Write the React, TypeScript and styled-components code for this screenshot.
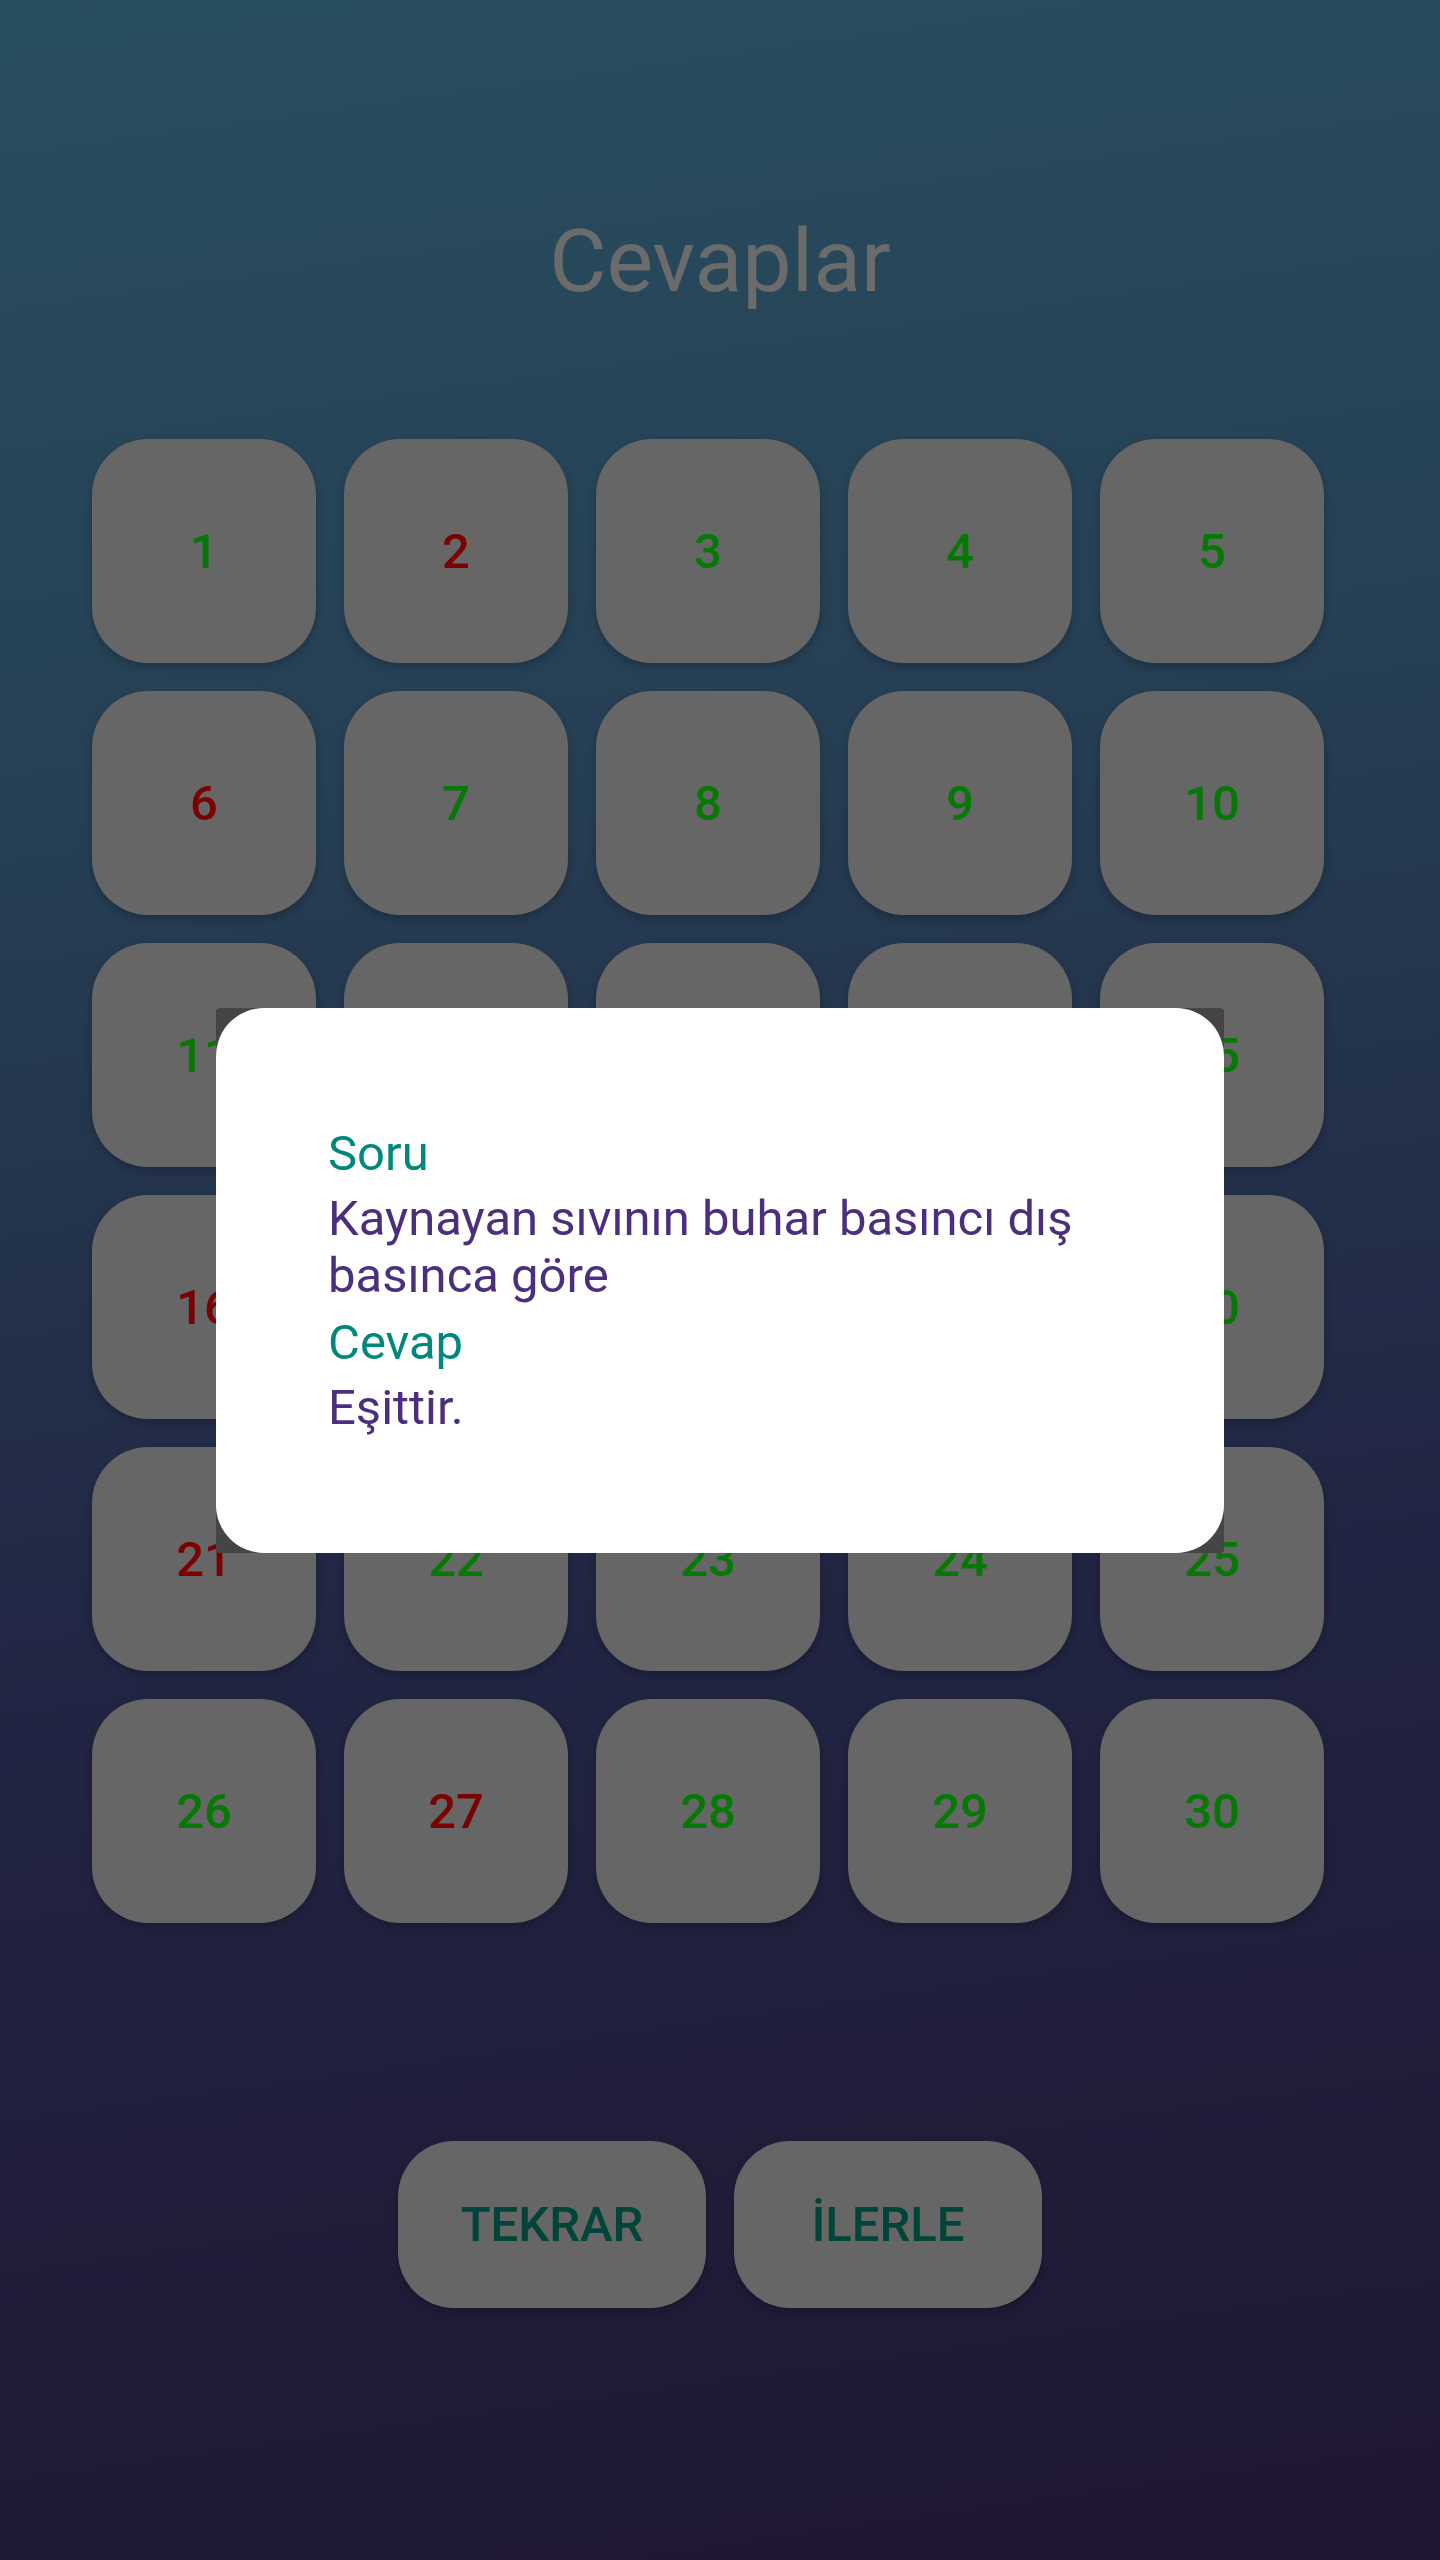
import React from "react";
import styled, { createGlobalStyle } from "styled-components";

const GlobalStyle = createGlobalStyle`
  html, body {
    margin: 0;
    padding: 0;
  }
  body {
    font-family: Roboto, "Noto Sans", sans-serif;
  }
`;

const Screen = styled.div`
  width: 1440px;
  height: 2560px;
  background: linear-gradient(172deg, #284f5f 0%, #263f54 30%, #212543 62%, #1f1631 100%);
  display: flex;
  flex-direction: column;
  overflow: hidden;
`;

const Title = styled.h1`
  margin: 209px 0 0;
  font-family: Roboto, sans-serif;
  font-weight: 400;
  font-size: 88px;
  line-height: 103px;
  color: #6b6b6b;
  text-align: center;
`;

const Grid = styled.div`
  margin-top: 127px;
  padding-left: 92px;
  display: grid;
  grid-template-columns: repeat(5, 224px);
  grid-auto-rows: 224px;
  gap: 28px;
`;

const Tile = styled.div<{ $ok: boolean }>`
  background: #666666;
  border-radius: 56px;
  box-shadow: 0 4px 8px rgba(0, 0, 0, 0.22);
  display: flex;
  align-items: center;
  justify-content: center;
  font-family: Roboto, sans-serif;
  font-weight: 500;
  font-size: 49px;
  color: ${(p) => (p.$ok ? "#067806" : "#7a0202")};
`;

const ButtonRow = styled.div`
  margin-top: 218px;
  display: flex;
  justify-content: center;
  gap: 28px;
`;

const ActionButton = styled.div`
  width: 308px;
  height: 167px;
  background: #666666;
  border-radius: 56px;
  box-shadow: 0 4px 8px rgba(0, 0, 0, 0.22);
  display: flex;
  align-items: center;
  justify-content: center;
  font-family: Roboto, sans-serif;
  font-weight: 500;
  font-size: 49px;
  letter-spacing: 0;
  color: #00443a;
`;

const Overlay = styled.div`
  position: fixed;
  inset: 0;
  display: flex;
  align-items: center;
  justify-content: center;
`;

const DialogFrame = styled.div`
  width: 1008px;
  height: 545px;
  background: #454545;
  border-radius: 4px;
  display: flex;
`;

const DialogCard = styled.div`
  flex: 1;
  background: #ffffff;
  border-radius: 48px;
  padding: 0 112px;
  display: flex;
  flex-direction: column;
  justify-content: center;
`;

const Label = styled.div<{ $first?: boolean }>`
  font-family: Roboto, sans-serif;
  font-size: 49px;
  line-height: 57px;
  color: #00897b;
  margin-top: ${(p) => (p.$first ? "0" : "10px")};
`;

const Body = styled.div`
  font-family: Roboto, sans-serif;
  font-size: 49px;
  line-height: 57px;
  color: #4b2f7e;
  margin-top: 8px;
`;

const wrong = new Set([2, 6, 16, 21, 27]);

export default function App() {
  const nums = Array.from({ length: 30 }, (_, i) => i + 1);
  return (
    <>
      <GlobalStyle />
      <Screen>
        <Title>Cevaplar</Title>
        <Grid>
          {nums.map((n) => (
            <Tile key={n} $ok={!wrong.has(n)}>
              {n}
            </Tile>
          ))}
        </Grid>
        <ButtonRow>
          <ActionButton>TEKRAR</ActionButton>
          <ActionButton>İLERLE</ActionButton>
        </ButtonRow>
      </Screen>
      <Overlay>
        <DialogFrame>
          <DialogCard>
            <Label $first>Soru</Label>
            <Body>Kaynayan sıvının buhar basıncı dış basınca göre</Body>
            <Label>Cevap</Label>
            <Body>Eşittir.</Body>
          </DialogCard>
        </DialogFrame>
      </Overlay>
    </>
  );
}
